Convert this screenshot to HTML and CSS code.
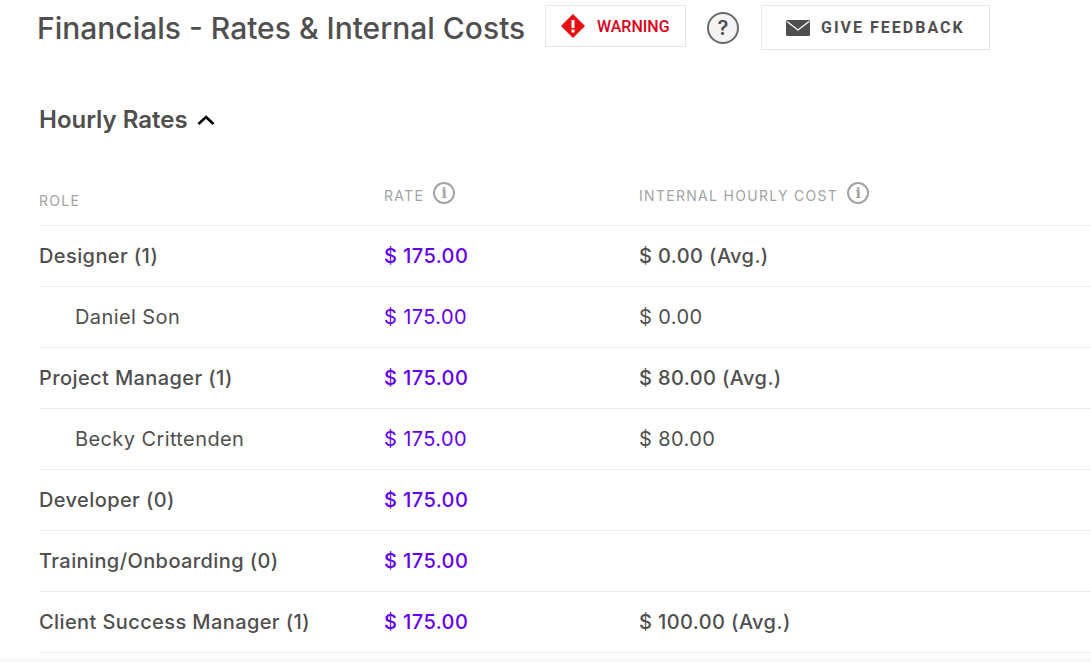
FILE: index.html
```html
<!DOCTYPE html>
<html lang="en">
<head>
<meta charset="utf-8">
<title>Financials</title>
<link rel="stylesheet" href="styles.css">
</head>
<body>
<header class="top">
  <h1 class="title">Financials - Rates &amp; Internal Costs</h1>
  <div class="warning">
    <svg class="warn-icon" width="24" height="24" viewBox="0 0 24 24"><path d="M12 0 24 12 12 24 0 12Z" fill="#e30f13"/><rect x="10.5" y="6" width="3" height="8" fill="#fff"/><rect x="10.5" y="15.500" width="3" height="3" fill="#fff"/></svg>
    <span>WARNING</span>
  </div>
  <div class="help">?</div>
  <div class="feedback">
    <svg width="24" height="16" viewBox="0 0 24 16"><rect width="24" height="16" rx="1.500" fill="#504f4f"/><path d="M1 1.500 12 10 23 1.500" fill="none" stroke="#fff" stroke-width="1.300"/></svg>
    <span>GIVE FEEDBACK</span>
  </div>
</header>
<section class="section">
  <h2 class="section-title">Hourly Rates
    <svg width="18" height="12" viewBox="0 0 18 12"><path d="M1.500 10 9 3 16.500 10" fill="none" stroke="#000" stroke-width="2.600"/></svg>
  </h2>
  <div class="row head">
    <div class="c1">ROLE</div>
    <div class="c2">RATE <span class="info">i</span></div>
    <div class="c3">INTERNAL HOURLY COST <span class="info">i</span></div>
  </div>
  <div class="row group"><div class="c1">Designer (1)</div><div class="c2 rate">$ 175.00</div><div class="c3">$ 0.00 (Avg.)</div></div>
  <div class="row person"><div class="c1">Daniel Son</div><div class="c2 rate">$ 175.00</div><div class="c3">$ 0.00</div></div>
  <div class="row group"><div class="c1">Project Manager (1)</div><div class="c2 rate">$ 175.00</div><div class="c3">$ 80.00 (Avg.)</div></div>
  <div class="row person"><div class="c1">Becky Crittenden</div><div class="c2 rate">$ 175.00</div><div class="c3">$ 80.00</div></div>
  <div class="row group"><div class="c1">Developer (0)</div><div class="c2 rate">$ 175.00</div><div class="c3"></div></div>
  <div class="row group"><div class="c1">Training/Onboarding (0)</div><div class="c2 rate">$ 175.00</div><div class="c3"></div></div>
  <div class="row group"><div class="c1">Client Success Manager (1)</div><div class="c2 rate">$ 175.00</div><div class="c3">$ 100.00 (Avg.)</div></div>
</section>
<div class="foot"></div>
</body>
</html>
```
FILE: styles.css
```css
html, body { margin: 0; padding: 0; height: 662px; overflow: hidden; background: #fff; }
body { font-family: Inter, "Liberation Sans", sans-serif; color: #504f4f; }
.top { display: flex; align-items: flex-start; height: 50px; padding: 5px 0 0 37px; box-sizing: border-box; }
.title { margin: 5px 0 0; font-size: 30px; line-height: 36px; font-weight: 500; letter-spacing: 0; white-space: nowrap; width: 508px; }
.warning { box-sizing: border-box; width: 141px; height: 42px; border: 1px solid #e6e6e6; display: flex; align-items: center; padding-left: 15px; gap: 12px; font-family: "Roboto", sans-serif; font-size: 16px; font-weight: 500; color: #d9001b; }
.help { box-sizing: border-box; width: 32px; height: 32px; margin: 7px 0 0 21px; border: 2px solid #6a6a6a; border-radius: 50%; background: #f4f4f4; text-align: center; font-size: 20px; line-height: 28px; font-weight: 600; }
.feedback { box-sizing: border-box; width: 229px; height: 45px; margin-left: 22px; border: 1px solid #e6e6e6; display: flex; align-items: center; padding-left: 24px; gap: 11px; font-family: "Roboto", sans-serif; font-size: 16px; font-weight: 700; letter-spacing: 2px; }
.section { margin-left: 39px; }
.section-title { margin: 0; padding-top: 53px; font-size: 24px; line-height: 34px; font-weight: 600; letter-spacing: 0; display: flex; align-items: center; gap: 9px; }
.row { display: flex; align-items: center; height: 61px; box-sizing: border-box; border-bottom: 1px solid #ececec; font-size: 20px; letter-spacing: 0.4px; }
.c1 { width: 345px; }
.c2 { width: 255px; }
.head { height: 89px; align-items: flex-end; padding-bottom: 17px; font-size: 14px; letter-spacing: 1.3px; color: #a3a3a3; }
.head .c1 { margin-bottom: -1px; }
.head .c2, .head .c3 { display: flex; align-items: center; gap: 9px; }
.info { box-sizing: border-box; width: 22px; height: 22px; margin-bottom: 4px; border: 2px solid #a3a3a3; border-radius: 50%; font-family: "DejaVu Serif", serif; font-weight: 700; font-size: 14px; line-height: 18px; text-align: center; letter-spacing: 0; }
.group { font-weight: 500; }
.person .c1 { padding-left: 36px; box-sizing: border-box; }
.person { font-weight: 400; }
.rate { color: #6200ee; }
.foot { height: 6px; margin-top: 4px; background: #fafafa; }
```
